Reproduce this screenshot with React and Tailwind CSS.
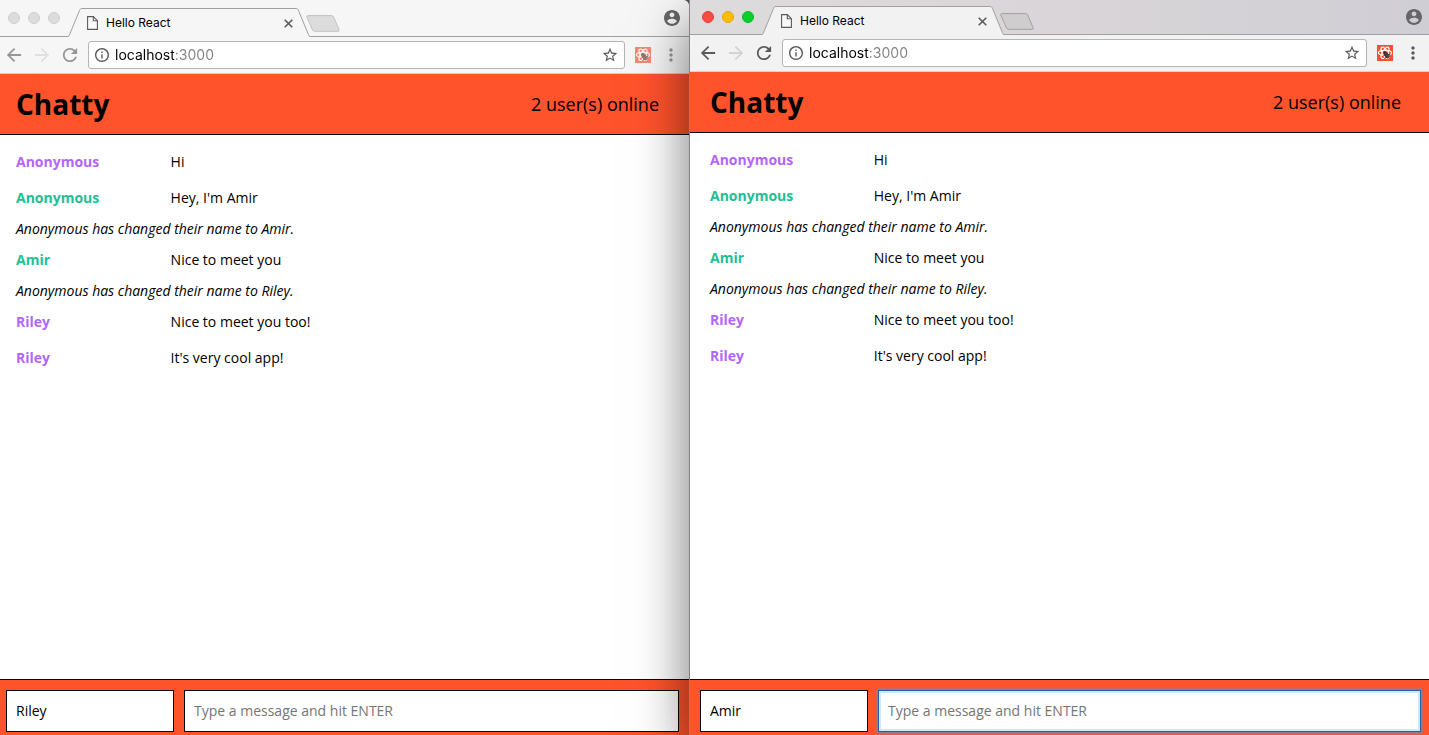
const logs = [
  { type: "message", name: "Anonymous", color: "purple", text: "Hi" },
  { type: "message", name: "Anonymous", color: "green", text: "Hey, I'm Amir" },
  { type: "notice", text: "Anonymous has changed their name to Amir." },
  { type: "message", name: "Amir", color: "green", text: "Nice to meet you" },
  { type: "notice", text: "Anonymous has changed their name to Riley." },
  { type: "message", name: "Riley", color: "purple", text: "Nice to meet you too!" },
  { type: "message", name: "Riley", color: "purple", text: "It's very cool app!" },
];

const nameColors = { purple: "text-[#b266ff]", green: "text-[#20bf96]" };

function TrafficLights({ active }) {
  const lights = active
    ? ["bg-[#fc4b45] border-[#e23e3a]", "bg-[#febc05] border-[#e5a60a]", "bg-[#09cf2d] border-[#0ab829]"]
    : ["bg-[#dcdcdc] border-[#cfcfcf]", "bg-[#dcdcdc] border-[#cfcfcf]", "bg-[#dcdcdc] border-[#cfcfcf]"];
  return (
    <div className="flex gap-2">
      {["Close window", "Minimize window", "Zoom window"].map((label, i) => (
        <button key={label} aria-label={label} className={`size-3 rounded-full border ${lights[i]}`} />
      ))}
    </div>
  );
}

function PageIcon() {
  return (
    <svg width="11" height="14" viewBox="0 0 11 14" fill="none" stroke="#5a5a5a" strokeWidth="1.1">
      <path d="M.6.6H6.3L10.4 4.7V13.4H.6Z" fill="#fff" fillOpacity=".5" />
      <path d="M6.3.6V4.7H10.4" />
    </svg>
  );
}

function Tab({ active }) {
  const fill = active ? "#f2f2f2" : "#f6f6f6";
  return (
    <div className="flex h-[29px] items-stretch self-end">
      <svg width="14" height="29" viewBox="0 0 14 29" fill={fill}>
        <path d="M0 29V28.5C1 28.3 1.2 27.5 1.6 26.5L11.5 2.5C12 1.2 12.6.5 14 .5V29Z" />
        <path d="M0 28.5C1 28.3 1.2 27.5 1.6 26.5L11.5 2.5C12 1.2 12.6.5 14 .5" stroke="#a0a0a0" fill="none" />
      </svg>
      <div className={`flex w-[214px] items-center border-t border-[#a0a0a0] pl-[5px] pr-[3px] ${active ? "bg-[#f2f2f2]" : "bg-[#f6f6f6]"}`}>
        <PageIcon />
        <span className="flex-1 pl-2 font-['Inter',sans-serif] text-[12px] leading-4 text-black">Hello React</span>
        <button aria-label="Close tab">
          <svg width="9" height="9" viewBox="0 0 9 9" stroke="#5a5a5a" strokeWidth="1.6">
            <path d="M.7.7 8.3 8.3M8.3.7.7 8.3" />
          </svg>
        </button>
      </div>
      <svg width="14" height="29" viewBox="0 0 14 29" fill={fill}>
        <path d="M14 29V28.5C13 28.3 12.8 27.5 12.4 26.5L2.5 2.5C2 1.2 1.4.5 0 .5V29Z" />
        <path d="M14 28.5C13 28.3 12.8 27.5 12.4 26.5L2.5 2.5C2 1.2 1.4.5 0 .5" stroke="#a0a0a0" fill="none" />
      </svg>
    </div>
  );
}

function NewTab({ active }) {
  return (
    <button aria-label="New tab" className="mb-1 -ml-1 self-end">
      <svg width="34" height="17" viewBox="0 0 34 17">
        <path
          d="M2.2.6H25.5Q27 .6 27.6 2L33 14.4Q33.8 16.3 32 16.3H8.6Q7.2 16.3 6.5 15L.9 2.2Q.4.6 2.2.6Z"
          fill={active ? "#cfcdce" : "#dcdcdc"}
          stroke={active ? "#a3a1a2" : "#c2c2c2"}
        />
      </svg>
    </button>
  );
}

function ProfileIcon() {
  return (
    <svg width="16" height="16" viewBox="2 2 20 20" fill="#666">
      <path d="M12 2C6.48 2 2 6.48 2 12s4.48 10 10 10 10-4.48 10-10S17.52 2 12 2zm0 3c1.66 0 3 1.34 3 3s-1.34 3-3 3-3-1.34-3-3 1.34-3 3-3zm0 14.2c-2.5 0-4.71-1.28-6-3.22.03-1.99 4-3.08 6-3.08 1.99 0 5.97 1.09 6 3.08-1.29 1.94-3.5 3.22-6 3.22z" />
    </svg>
  );
}

function MaterialIcon({ d, size, box, color }) {
  return (
    <svg width={size} height={size} viewBox={box} fill={color}>
      <path d={d} />
    </svg>
  );
}

function ExtensionIcon({ active }) {
  return (
    <svg width="16" height="16" viewBox="0 0 16 16" opacity={active ? 1 : 0.65}>
      <rect width="16" height="16" fill="#f4502f" />
      <g fill="none" stroke="#fff" strokeWidth="1.2">
        <ellipse cx="8" cy="7.8" rx="6.6" ry="2.5" />
        <ellipse cx="8" cy="7.8" rx="6.4" ry="2.5" transform="rotate(60 8 7.8)" />
        <ellipse cx="8" cy="7.8" rx="6.4" ry="2.5" transform="rotate(120 8 7.8)" />
      </g>
      <path d="M5.5 7.8 8 5.6 11 8 8 11Z" fill="#f4502f" />
      <g fill="#333" stroke="#333" strokeWidth=".9">
        <circle cx="7.6" cy="7.6" r="1.1" />
        <ellipse cx="10" cy="10.6" rx="1.9" ry="2.6" transform="rotate(-40 10 10.6)" />
        <path d="M6.2 10.3 8 10M7.6 13 9 12M10 6.6 10 8.6M13.2 9.3 11.5 9.8" />
      </g>
      <path d="M8.6 11 11 8.9M9.8 12.4 12.2 10.4" stroke="#f4502f" strokeWidth=".6" />
    </svg>
  );
}

const BACK = "M20 11H7.83l5.59-5.59L12 4l-8 8 8 8 1.41-1.41L7.83 13H20v-2z";
const FORWARD = "M12 4l-1.41 1.41L16.17 11H4v2h12.17l-5.58 5.59L12 20l8-8z";
const RELOAD =
  "M17.65 6.35C16.2 4.9 14.21 4 12 4c-4.42 0-7.99 3.58-7.99 8s3.57 8 7.99 8c3.73 0 6.84-2.55 7.73-6h-2.08c-.82 2.33-3.04 4-5.65 4-3.31 0-6-2.69-6-6s2.69-6 6-6c1.66 0 3.14.69 4.22 1.78L13 11h7V4l-2.35 2.35z";
const INFO =
  "M11 17h2v-6h-2v6zm1-15C6.48 2 2 6.48 2 12s4.48 10 10 10 10-4.48 10-10S17.52 2 12 2zm0 18c-4.41 0-8-3.59-8-8s3.59-8 8-8 8 3.59 8 8-3.59 8-8 8zM11 9h2V7h-2v2z";
const STAR =
  "M22 9.24l-7.19-.62L12 2 9.19 8.63 2 9.24l5.46 4.73L5.82 21 12 17.27 18.18 21l-1.63-7.03L22 9.24zM12 15.4l-3.76 2.27 1-4.28-3.32-2.88 4.38-.38L12 6.1l1.71 4.04 4.38.38-3.32 2.88 1 4.28L12 15.4z";
const MORE =
  "M12 8c1.1 0 2-.9 2-2s-.9-2-2-2-2 .9-2 2 .9 2 2 2zm0 2c-1.1 0-2 .9-2 2s.9 2 2 2 2-.9 2-2-.9-2-2-2zm0 6c-1.1 0-2 .9-2 2s.9 2 2 2 2-.9 2-2-.9-2-2-2z";

function Toolbar({ active }) {
  const ink = active ? "#5a5a5a" : "#969696";
  return (
    <div className={`flex h-[37px] items-center border-b ${active ? "border-[#d4d4d4] bg-[#f2f2f2] pl-2.5" : "border-[#d0d0d0] bg-[#f6f6f6] pl-1.5"}`}>
      <div className="flex w-[82px] shrink-0 gap-3">
        <button aria-label="Back"><MaterialIcon d={BACK} size="16" box="3 3 18 18" color={ink} /></button>
        <button aria-label="Forward" disabled><MaterialIcon d={FORWARD} size="16" box="3 3 18 18" color={active ? "#d2d2d2" : "#e0e0e0"} /></button>
        <button aria-label="Reload"><MaterialIcon d={RELOAD} size="16" box="3 3 18 18" color={ink} /></button>
      </div>
      <div className="flex h-7 min-w-0 flex-1 items-center gap-1.5 rounded-[3px] border border-[#b5b5b5] bg-white px-1.5">
        <MaterialIcon d={INFO} size="14" box="2 2 20 20" color="#5a5a5a" />
        <input
          aria-label="Address"
          defaultValue="localhost:3000"
          className="min-w-0 flex-1 bg-linear-[to_right,#000_59px,#808080_59px] bg-clip-text font-['Inter',sans-serif] text-[14px] leading-5 text-transparent outline-none"
        />
        <button aria-label="Bookmark this page"><MaterialIcon d={STAR} size="16" box="1 1 22 22" color="#5a5a5a" /></button>
      </div>
      <div className={`flex items-center gap-2.5 pl-2.5 ${active ? "pr-1.5" : "pr-2"}`}>
        <button aria-label="React Developer Tools"><ExtensionIcon active={active} /></button>
        <button aria-label="Menu"><MaterialIcon d={MORE} size="20" box="0 0 24 24" color={ink} /></button>
      </div>
    </div>
  );
}

function Log({ entry }) {
  if (entry.type === "notice") {
    return <li className="flex h-[26px] items-center italic">{entry.text}</li>;
  }
  return (
    <li className="flex h-9 items-center">
      <span className={`box-content w-1/5 shrink-0 pr-6 font-bold ${nameColors[entry.color]}`}>{entry.name}</span>
      <span>{entry.text}</span>
    </li>
  );
}

function Chat({ user, active }) {
  return (
    <div className="flex flex-1 flex-col bg-white font-['Open_Sans',sans-serif] text-[14px] leading-5 text-black">
      <header className={`flex h-[61px] items-center justify-between border-b border-black bg-[#ff532c] ${active ? "pl-5 pr-7" : "pl-4 pr-[30px]"}`}>
        <h1 className="text-[28px] leading-9 font-bold">Chatty</h1>
        <span className="text-[18px] leading-6">2 user(s) online</span>
      </header>
      <ul className={`flex-1 pt-[9px] pr-5 ${active ? "pl-5" : "pl-4"}`}>
        {logs.map((entry, i) => <Log key={i} entry={entry} />)}
      </ul>
      <footer className={`flex gap-2.5 border-t border-black bg-[#ff532c] pt-2.5 pb-[3px] ${active ? "pl-2.5 pr-2" : "pl-1.5 pr-2.5"}`}>
        <input aria-label="Your name" defaultValue={user} className="h-[42px] w-[168px] shrink-0 border border-black bg-white px-[9px] pb-0.5 outline-none" />
        <input
          aria-label="Message"
          placeholder="Type a message and hit ENTER"
          className={`h-[42px] min-w-0 flex-1 border bg-white px-[9px] pb-0.5 placeholder-[#757575] outline-none ${active ? "border-[#1f62ad] shadow-[0_0_2px_1px_#5a8fc8,inset_0_0_1px_2px_#cfe6fa]" : "border-black"}`}
        />
      </footer>
    </div>
  );
}

function Window({ user, active }) {
  return (
    <section
      aria-label={`${user}'s browser`}
      className={`flex min-h-screen min-w-0 flex-col ${active ? "relative flex-[739] border-l border-[#858585] shadow-[0_22px_50px_rgba(0,0,0,0.55)]" : "flex-[689] overflow-hidden rounded-tr-md bg-[#f6f6f6]"}`}
    >
      <div className={`flex border-b border-[#a0a0a0] ${active ? "h-[35px] bg-linear-to-r from-[#dddbdc] via-[#d9d5d8] to-[#d0ced5] pl-3" : "h-[37px] bg-[#f6f6f6] pl-2"}`}>
        <div className="flex w-[60px] shrink-0 items-center"><TrafficLights active={active} /></div>
        <div className="-mb-px flex"><Tab active={active} /></div>
        <NewTab active={active} />
        <div className={`flex flex-1 items-center justify-end ${active ? "pr-[7px]" : "pr-[9px]"}`}>
          <button aria-label="Profile"><ProfileIcon /></button>
        </div>
      </div>
      <Toolbar active={active} />
      <Chat user={user} active={active} />
    </section>
  );
}

export default function App() {
  return (
    <main className="flex min-h-screen bg-[#555]">
      <Window user="Riley" />
      <Window user="Amir" active />
    </main>
  );
}
